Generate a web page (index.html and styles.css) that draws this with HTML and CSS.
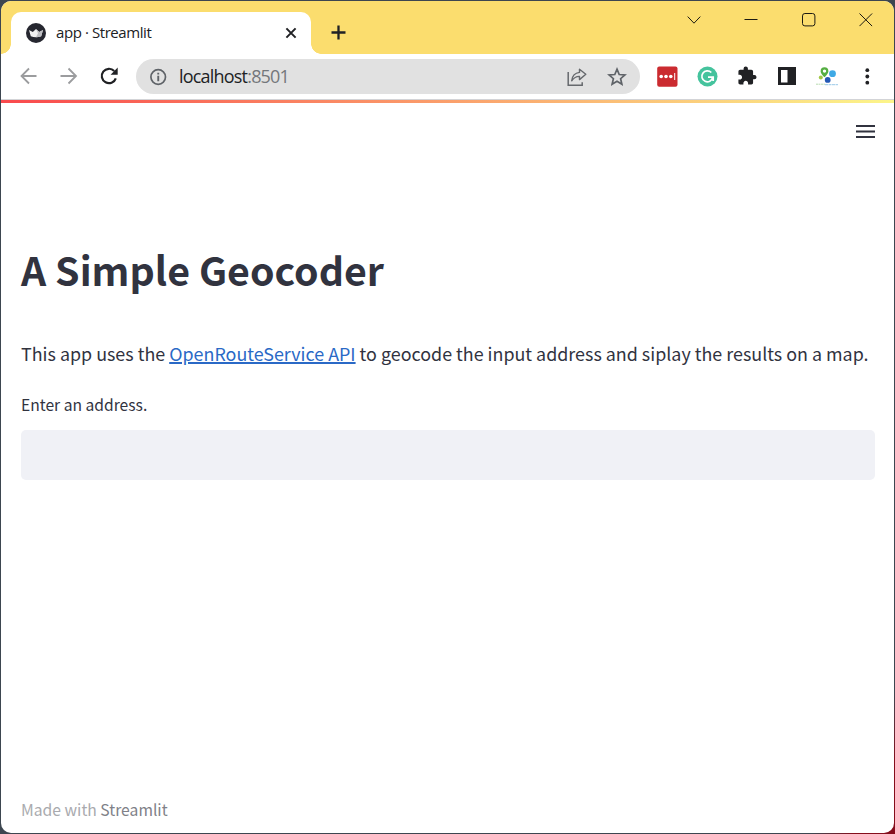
FILE: index.html
```html
<!DOCTYPE html>
<html lang="en">
<head>
<meta charset="utf-8">
<title>app · Streamlit</title>
<link rel="stylesheet" href="styles.css">
</head>
<body>
<div class="window">
  <header class="tabstrip">
    <div class="tab">
      <svg class="favicon" width="20" height="20" viewBox="0 0 20 20"><circle cx="10" cy="10" r="10" fill="#262730"/><path d="M3 7l3.800 2L10 6l3.200 3L17 7l-1.800 6.300Q10 15 4.800 13.300z" fill="#f1f1f2"/><path d="M10 6l3.200 3L17 7l-1.800 6.300q-2.500.9-5.200.9l2-4z" fill="#bfbfc3"/></svg>
      <span class="tab-title">app · Streamlit</span>
      <svg class="tab-close" width="12" height="12" viewBox="0 0 12 12"><path d="M1.400 1.400l9.200 9.200M10.600 1.400l-9.200 9.200" stroke="#202124" stroke-width="2" fill="none"/></svg>
    </div>
    <svg class="new-tab" width="16" height="16" viewBox="0 0 16 16"><path d="M7.500 .5v14M.5 7.500h14" stroke="#202124" stroke-width="2.300"/></svg>
    <div class="controls">
      <svg width="14" height="14" viewBox="0 0 14 14"><path d="M.7 3.600L7 10.200l6.300-6.600"/></svg>
      <svg width="14" height="14" viewBox="0 0 14 14"><path d="M.5 6.500h13"/></svg>
      <svg width="14" height="14" viewBox="0 0 14 14"><rect x=".5" y=".5" width="12.400" height="12.400" rx="2.400"/></svg>
      <svg width="14" height="14" viewBox="0 0 14 14"><path d="M.5.500l12.600 12.600M13.100.500L.5 13.100"/></svg>
    </div>
  </header>
  <div class="toolbar">
    <div class="nav">
      <svg width="20" height="20" viewBox="0 0 20 20"><path d="M17.500 10H3M10 2.500L2.500 10l7.500 7.500" fill="none" stroke="#9b9c9e" stroke-width="1.800"/></svg>
      <svg width="20" height="20" viewBox="0 0 20 20"><path d="M1.500 10h15M9.500 2.500l7.500 7.500-7.500 7.500" fill="none" stroke="#9b9c9e" stroke-width="1.800"/></svg>
      <svg width="20" height="20" viewBox="0 0 20 20"><path d="M16.800 12.300A7.200 7.200 0 1 1 15.200 5" fill="none" stroke="#202124" stroke-width="2.200"/><path d="M18.700 1.600v7.100h-7.100z" fill="#202124"/></svg>
    </div>
    <div class="omnibox">
      <svg width="18" height="18" viewBox="0 0 18 18"><circle cx="9.200" cy="9" r="7.300" fill="none" stroke="#5f6368" stroke-width="1.700"/><path d="M8.300 7.800h1.900v5.400H8.300zM8.300 4.700h1.900v1.900H8.300z" fill="#5f6368"/></svg>
      <span class="url">localhost<span class="port">:8501</span></span>
      <svg class="share" width="20" height="20" viewBox="0 0 20 20"><path d="M1.200 5v13.200h14v-3" fill="none" stroke="#66696d" stroke-width="1.500"/><path d="M12.500 2.200L18.800 7.300l-6.300 5.300V9.400q-4.500-.2-7.800 4.400Q5.500 6.300 12.500 5.400z" fill="none" stroke="#66696d" stroke-width="1.400" stroke-linejoin="round"/></svg>
      <svg class="star" width="20" height="20" viewBox="0 0 20 20"><path d="M10 2.200l2.200 5.300 5.700.5-4.300 3.700 1.300 5.600-4.900-3-4.900 3 1.300-5.600L2.100 8l5.700-.5z" fill="none" stroke="#5f6368" stroke-width="1.700"/></svg>
    </div>
    <div class="extensions">
      <svg width="22" height="22" viewBox="0 0 22 22"><rect x="1.200" y="1.400" width="20.300" height="20.300" rx="2" fill="#cb2b30"/><g fill="#fff"><circle cx="5.200" cy="11.500" r="1.800"/><circle cx="10" cy="11.500" r="1.800"/><circle cx="14.800" cy="11.500" r="1.800"/><path d="M18.200 8h1v7h-1z"/></g></svg>
      <svg width="22" height="22" viewBox="0 0 22 22"><circle cx="11.500" cy="11.500" r="10" fill="#45c39d"/><path d="M15.300 7.500A5.500 5.500 0 1 0 16.700 12.500M12 12.200h5.200v3.800" fill="none" stroke="#fff" stroke-width="1.700"/></svg>
      <svg width="22" height="22" viewBox="-.8 -.6 25.500 25.500"><path fill="#202124" d="M20.500 11H19V7c0-1.100-.9-2-2-2h-4V3.500a2.500 2.500 0 0 0-5 0V5H4c-1.100 0-1.990.9-1.990 2v3.800H3.500c1.490 0 2.700 1.210 2.700 2.700s-1.210 2.700-2.700 2.700H2V20c0 1.100.9 2 2 2h3.800v-1.500c0-1.490 1.210-2.700 2.700-2.700s2.700 1.210 2.700 2.700V22H17c1.100 0 2-.9 2-2v-4h1.500a2.500 2.500 0 0 0 0-5z"/></svg>
      <svg width="22" height="22" viewBox="0 0 22 22"><path fill="#202124" fill-rule="evenodd" d="M2 2h18v18H2zm3 3v12.500h6.500V5z"/></svg>
      <svg width="24" height="22" viewBox="0 0 24 22"><path d="M9.500 2.300a3.900 3.900 0 0 1 3.900 3.900c0 2.400-3.900 6-3.900 6S5.600 8.600 5.600 6.200a3.900 3.900 0 0 1 3.900-3.900zm0 2.100a1.700 1.700 0 1 0 0 3.400 1.700 1.700 0 0 0 0-3.400z" fill="#55ae42"/><circle cx="17.500" cy="8.700" r="3.400" fill="#3fa9e5"/><circle cx="5.800" cy="12.400" r="2" fill="#a1c746"/><circle cx="12.700" cy="14.900" r="2.900" fill="#2459b5"/><path d="M1 19.200h9" stroke="#b9dbb1" stroke-dasharray="2 .5"/><path d="M10 19.700h13" stroke="#9bc9e8" stroke-dasharray="3 .5"/></svg>
      <svg width="22" height="22" viewBox="0 0 22 22" fill="#202124"><circle cx="11.300" cy="5.200" r="1.900"/><circle cx="11.300" cy="11.500" r="1.900"/><circle cx="11.300" cy="17.700" r="1.900"/></svg>
    </div>
  </div>
  <div class="decoration"></div>
  <div class="menu-row">
    <svg width="20" height="14" viewBox="0 0 20 14"><path d="M1 2h19M1 7.500h19M1 13h19" stroke="#31333f" stroke-width="1.800"/></svg>
  </div>
  <main class="page">
    <h1>A Simple Geocoder</h1>
    <p class="intro">This app uses the <a href="#">OpenRouteService API</a> to geocode the input address and siplay the results on a map.</p>
    <label class="label" for="address">Enter an address.</label>
    <input class="address" id="address" type="text">
  </main>
  <footer class="footer">Made with <span class="brand">Streamlit</span></footer>
</div>
</body>
</html>
```
FILE: styles.css
```css
* { box-sizing: border-box; }
body {
  margin: 0;
  height: 834px;
  padding: 1px;
  overflow: hidden;
  background: linear-gradient(120deg, #3d4650 0 94%, #850d1b 97%);
  font-family: "Noto Sans CJK SC", sans-serif;
}
svg { display: block; flex: none; }
.window {
  display: flex;
  flex-direction: column;
  height: 832px;
  overflow: hidden;
  border-radius: 10px;
  background: #fff;
}
.tabstrip {
  display: flex;
  flex: none;
  height: 53px;
  padding: 11px 0 0 10px;
  background: #fbdd6e;
}
.tab {
  position: relative;
  display: flex;
  align-items: center;
  width: 300px;
  height: 42px;
  padding: 0 14px 0 15px;
  border-radius: 10px 10px 0 0;
  background: #fff;
}
.tab::before, .tab::after {
  content: "";
  position: absolute;
  bottom: 0;
  width: 10px;
  height: 10px;
}
.tab::before { left: -10px; background: radial-gradient(circle at 0 0, transparent 9.5px, #fff 10px); }
.tab::after { right: -10px; background: radial-gradient(circle at 100% 0, transparent 9.5px, #fff 10px); }
.tab-title {
  margin: 0 0 2px 10px;
  font: 15px "Open Sans", sans-serif;
  letter-spacing: -0.42px;
  color: #202124;
}
.tab-close { margin-left: auto; }
.new-tab { margin: 13px 0 0 20px; }
.controls {
  display: flex;
  gap: 43px;
  margin: 1px 21px 0 auto;
  fill: none;
  stroke: #1c1a12;
}
.controls svg:nth-child(-n+2) { transform: translateX(-1px); }
.toolbar {
  display: flex;
  flex: none;
  align-items: center;
  height: 46px;
  padding: 0 15px 0 18px;
  border-bottom: 1px solid #d3d4d7;
}
.nav { display: flex; gap: 20px; margin-bottom: 1px; }
.omnibox {
  display: flex;
  flex: none;
  align-items: center;
  width: 504px;
  height: 35px;
  margin-left: 17px;
  padding: 0 13px;
  border-radius: 18px;
  background: #e1e1e1;
}
.url {
  margin: 0 0 2px 12px;
  font: 18px "Open Sans", sans-serif;
  letter-spacing: -0.8px;
  color: #202124;
}
.port { color: #74777b; }
.share { margin-left: auto; }
.star { margin-left: 20px; }
.extensions { display: flex; gap: 18px; margin: 0 0 1px 16px; }
.extensions svg:nth-child(5) { margin: 0 -1px; }
.decoration {
  flex: none;
  height: 3px;
  background: linear-gradient(90deg, #f9494d, #fcf58a);
}
.menu-row {
  display: flex;
  flex: none;
  justify-content: flex-end;
  padding: 21px 19px 0 0;
}
.page {
  display: flex;
  flex-direction: column;
  padding: 104px 19px 0 20px;
}
h1 {
  margin: 0;
  font-size: 39.3px;
  line-height: 53px;
  font-weight: 700;
  color: #31333f;
}
.intro {
  margin: 42px 0 0;
  font-size: 17.9px;
  line-height: 32px;
  white-space: nowrap;
  color: #31333f;
}
.intro a { color: #2a69c6; text-decoration-thickness: 2px; text-underline-offset: 1px; }
.label { margin-top: 23px; font-size: 15.65px; line-height: 25px; color: #31333f; }
.address {
  width: 100%;
  height: 50px;
  margin-top: 13px;
  padding: 0 12px;
  border: 0;
  border-radius: 5px;
  background: #f0f1f6;
}
.footer {
  margin-top: auto;
  padding: 0 20px 10px;
  font-size: 15.7px;
  line-height: 26px;
  color: #a9aaae;
}
.brand { color: #808188; }
```
